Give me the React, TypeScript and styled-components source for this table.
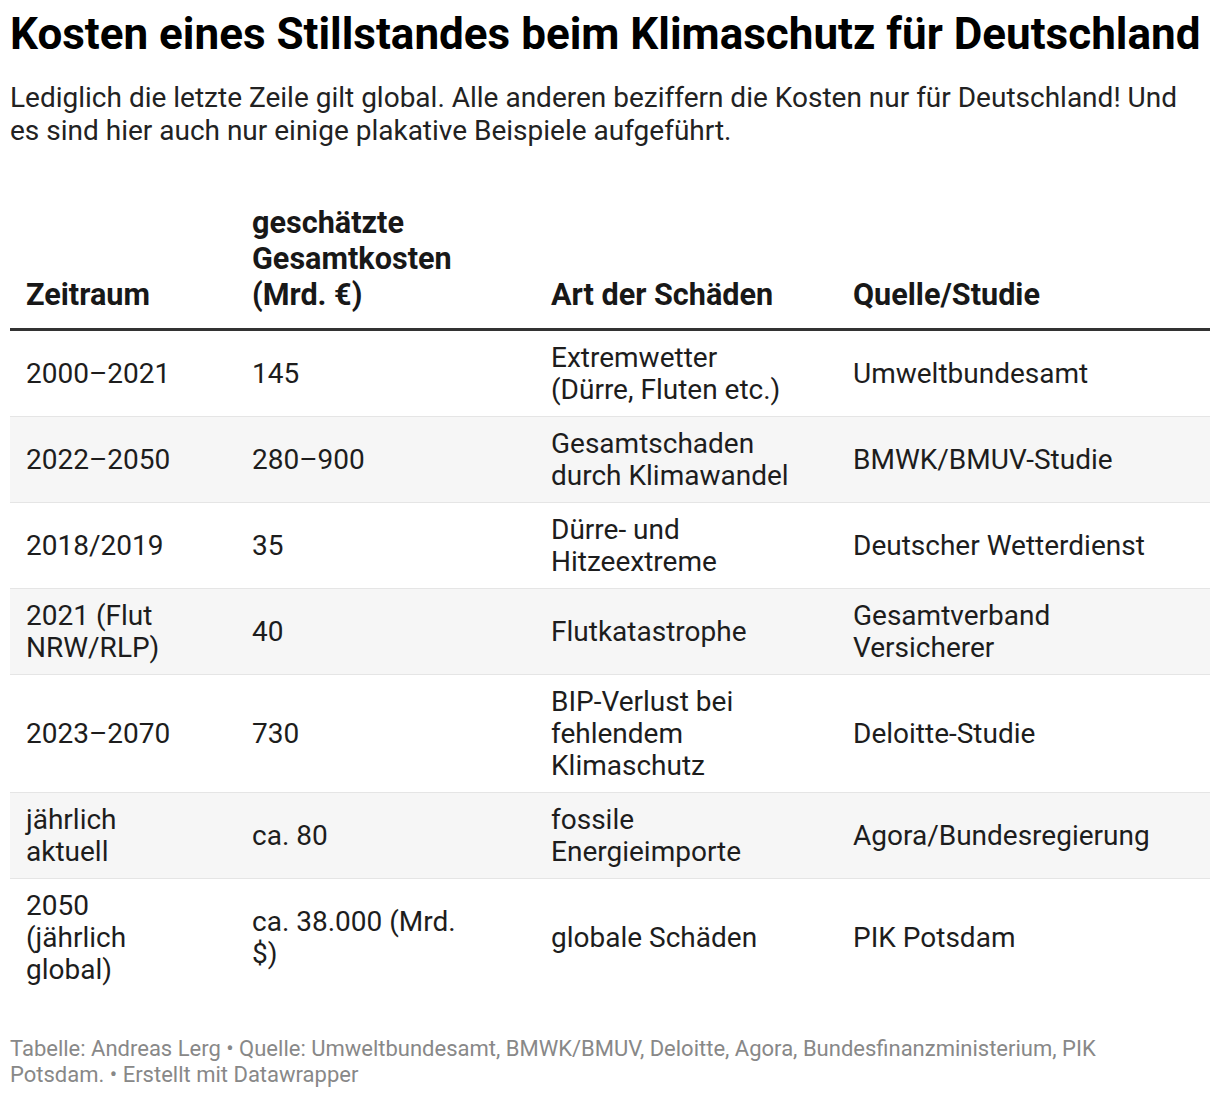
import * as React from 'react';
import styled, { createGlobalStyle } from 'styled-components';

const GlobalStyle = createGlobalStyle`
    html, body {
        margin: 0;
        padding: 0;
        background: #ffffff;
    }
    body {
        font-family: Roboto, "Noto Sans", "Liberation Sans", sans-serif;
        color: #1d1d1d;
    }
    *, *::before, *::after {
        box-sizing: border-box;
    }
`;

const Page = styled.div`
    width: 1220px;
    padding: 8px 10px 0 10px;
`;

const Title = styled.h1`
    margin: 0;
    font-size: 44px;
    line-height: 53px;
    font-weight: 700;
    color: #000000;
`;

const Description = styled.p`
    margin: 20px 0 0 0;
    font-size: 28px;
    line-height: 33px;
    color: #222222;
`;

const Table = styled.table`
    margin-top: 40px;
    width: 1200px;
    border-collapse: collapse;
    table-layout: fixed;
    font-size: 28px;
`;

const HeadCell = styled.th<{ $width: number; $padRight: number }>`
    width: ${(p) => p.$width}px;
    text-align: left;
    vertical-align: bottom;
    font-size: 30.6px;
    font-weight: 700;
    line-height: 36px;
    color: #181818;
    padding: 18px ${(p) => p.$padRight}px 15px 16px;
    border-bottom: 3px solid #333333;
`;

const Row = styled.tr<{ $striped: boolean; $last: boolean }>`
    background: ${(p) => (p.$striped ? '#f6f6f6' : '#ffffff')};
    border-bottom: ${(p) => (p.$last ? 'none' : '1px solid #e5e5e5')};
`;

const Cell = styled.td<{ $padRight: number }>`
    vertical-align: middle;
    line-height: 32px;
    padding: 11px ${(p) => p.$padRight}px 10px 16px;
    color: #1d1d1d;
`;

const Footer = styled.div`
    margin-top: 40px;
    max-width: 1110px;
    font-size: 22px;
    line-height: 26px;
    color: #888888;
`;

// width of each column, and the room kept free to its right
const columns = [
    { label: 'Zeitraum', width: 226, padRight: 55 },
    { label: 'geschätzte Gesamtkosten (Mrd. €)', width: 299, padRight: 40 },
    { label: 'Art der Schäden', width: 302, padRight: 40 },
    { label: 'Quelle/Studie', width: 373, padRight: 37 },
];

const rows: string[][] = [
    ['2000–2021', '145', 'Extremwetter (Dürre, Fluten etc.)', 'Umweltbundesamt'],
    ['2022–2050', '280–900', 'Gesamtschaden durch Klimawandel', 'BMWK/BMUV-Studie'],
    ['2018/2019', '35', 'Dürre- und Hitzeextreme', 'Deutscher Wetterdienst'],
    ['2021 (Flut NRW/RLP)', '40', 'Flutkatastrophe', 'Gesamtverband Versicherer'],
    ['2023–2070', '730', 'BIP-Verlust bei fehlendem Klimaschutz', 'Deloitte-Studie'],
    ['jährlich aktuell', 'ca. 80', 'fossile Energieimporte', 'Agora/Bundesregierung'],
    ['2050 (jährlich global)', 'ca. 38.000 (Mrd. $)', 'globale Schäden', 'PIK Potsdam'],
];

const App: React.FC = () => {
    return (
        <Page>
            <GlobalStyle />
            <Title>Kosten eines Stillstandes beim Klimaschutz für Deutschland</Title>
            <Description>
                Lediglich die letzte Zeile gilt global. Alle anderen beziffern die Kosten nur für Deutschland! Und
                es sind hier auch nur einige plakative Beispiele aufgeführt.
            </Description>
            <Table>
                <thead>
                    <tr>
                        {columns.map((c) => (
                            <HeadCell key={c.label} $width={c.width} $padRight={c.padRight}>
                                {c.label}
                            </HeadCell>
                        ))}
                    </tr>
                </thead>
                <tbody>
                    {rows.map((row, i) => (
                        <Row key={i} $striped={i % 2 === 1} $last={i === rows.length - 1}>
                            {row.map((cell, j) => (
                                <Cell key={j} $padRight={j === 1 ? 63 : columns[j].padRight}>{cell}</Cell>
                            ))}
                        </Row>
                    ))}
                </tbody>
            </Table>
            <Footer>
                Tabelle: Andreas Lerg • Quelle: Umweltbundesamt, BMWK/BMUV, Deloitte, Agora, Bundesfinanzministerium, PIK
                Potsdam. • Erstellt mit Datawrapper
            </Footer>
        </Page>
    );
};

export default App;
